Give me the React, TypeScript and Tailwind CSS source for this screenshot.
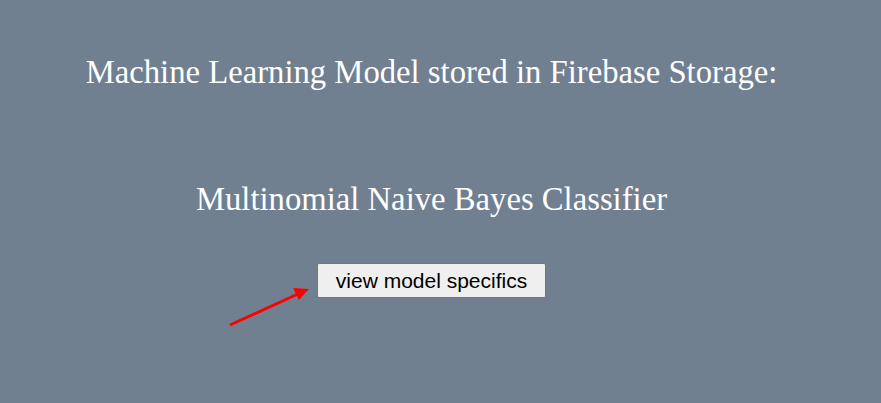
export default function App() {
    return (
        <div className="relative w-[881px] h-[403px] overflow-hidden bg-[#708090]">
            <div className="w-[863px] flex flex-col items-center text-center text-white font-['Liberation_Serif',serif]">
                <h1 className="mt-[53px] text-[32.7px] leading-[38px]">
                    Machine Learning Model stored in Firebase Storage:
                </h1>
                <h2 className="mt-[89px] text-[32.7px] leading-[38px]">Multinomial Naive Bayes Classifier</h2>
                <button className="mt-[45px] h-[35px] px-[18px] bg-[#efefef] border border-[#767676] rounded-[2px] text-black text-[21px] leading-none font-['Liberation_Sans',sans-serif]">
                    view model specifics
                </button>
            </div>
            {/* red arrow pointing at the button */}
            <svg className="absolute left-0 top-0" width="881" height="403">
                <line x1="230" y1="325" x2="300" y2="293" stroke="#ff0000" strokeWidth="3" />
                <polygon points="309,289 293,288 299,300" fill="#ff0000" />
            </svg>
        </div>
    )
}
